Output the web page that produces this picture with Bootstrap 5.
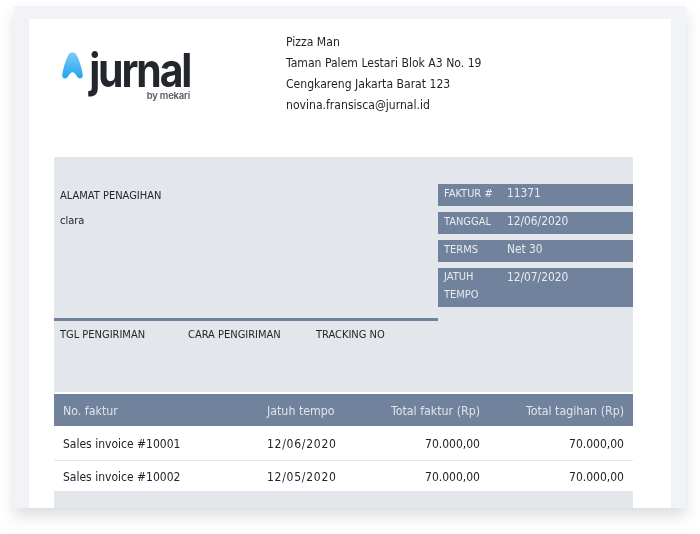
<!DOCTYPE html>
<html lang="id">
<head>
<meta charset="utf-8">
<title>Invoice</title>
<link href="https://cdn.jsdelivr.net/npm/bootstrap@5.3.0/dist/css/bootstrap.min.css" rel="stylesheet">
<style>
html,body{margin:0;background:#fff;height:534px;overflow:hidden}
body{font-family:"DejaVu Sans Condensed","DejaVu Sans",sans-serif;color:#24262b;font-size:12px}
.sheet-wrap{padding:6px 14px 0;filter:blur(.55px)}
.outer-frame{height:502px;padding:13px 15px 0;background:#f1f3f7;box-shadow:0 8px 14px rgba(90,100,120,.22)}
.paper{height:489px;background:#fff;padding:0 38px 0 25px;display:flex;flex-direction:column}
.head-row{height:138px;display:flex}
.logo-box{width:232px;padding:31px 0 0 8px;display:flex;align-items:flex-start}
.logo-mark{width:21px;height:28px;margin-top:2px;flex:none}
.logo-words{margin-left:6px;width:101px;display:flex;flex-direction:column;align-items:flex-end}
.logo-name{font-family:"Inter",sans-serif;font-weight:700;font-size:47px;line-height:36px;letter-spacing:-2.4px;color:#23262c;margin-top:2px;transform:scaleX(.87);transform-origin:right center;white-space:nowrap}
.logo-by{font-family:"Inter",sans-serif;font-weight:600;font-size:9.5px;line-height:10px;color:#555a63;letter-spacing:-.2px;margin-top:3px}
.addr{padding-top:13px;font-size:12.1px;line-height:21px;color:#1f2125}
.invoice{flex:1;background:#e3e6eb;font-size:11px}
.top-grid{display:flex;height:164px}
.bill-side{width:384px;padding:28px 6px 0;border-bottom:3px solid #71839d;line-height:22px;height:164px}
.bill-side p{margin:0 0 3px}
.meta-side{width:195px;padding-top:27px;display:flex;flex-direction:column;gap:6px}
.meta-line{background:#71829d;color:#e8ebf0;display:flex;padding:0 6px;height:22px;line-height:19px}
.meta-line.tall{height:39px;line-height:18px;padding-top:0}
.meta-key{width:63px}
.meta-val{font-size:11.8px}
.ship-row{height:71px;display:flex;padding:4px 6px 0;line-height:20px}
.ship-row span{width:128px}
.ship-sep{height:2px;background:#fff}
.lines{width:100%;font-size:12px}
.lines th{background:#71829d;color:#dfe4ea;font-weight:400;font-size:12.3px;height:32px;padding:2px 9px 0}
.lines td{background:#fff;height:34px;padding:2px 9px 0;color:#22242a;border-bottom:1px solid #e4e6eb}
.lines tr:last-child td{border-bottom:0;height:31px}
.lines .due-date{letter-spacing:.75px}
.col-no{width:204px}.col-due{width:107px}.col-fak{width:124px}
</style>
</head>
<body>
<div class="sheet-wrap">
<div class="outer-frame">
<div class="paper">
  <div class="head-row">
    <div class="logo-box">
      <svg class="logo-mark" viewBox="0 0 22 29" aria-hidden="true">
        <defs><linearGradient id="jg" x1="0" y1="0" x2="0" y2="1"><stop offset="0" stop-color="#7ccbf5"/><stop offset="1" stop-color="#22a3ee"/></linearGradient></defs>
        <path d="M7.6 1.6C9.2-.2 12.8-.2 14.4 1.6 17 5 20.6 15.5 21.7 23.5 22.2 27.4 18.6 29 16.4 26.4L13.4 22.4C12 20.6 10 20.6 8.6 22.4L5.6 26.4C3.4 29 -.2 27.4.3 23.5 1.4 15.5 5 5 7.6 1.6Z" fill="url(#jg)"/>
      </svg>
      <div class="logo-words">
        <div class="logo-name">jurnal</div>
        <div class="logo-by">by mekari</div>
      </div>
    </div>
    <div class="addr">
      <div>Pizza Man</div>
      <div>Taman Palem Lestari Blok A3 No. 19</div>
      <div>Cengkareng Jakarta Barat 123</div>
      <div>novina.fransisca@jurnal.id</div>
    </div>
  </div>
  <div class="invoice">
    <div class="top-grid">
      <div class="bill-side">
        <p>ALAMAT PENAGIHAN</p>
        <p>clara</p>
      </div>
      <div class="meta-side">
        <div class="meta-line"><span class="meta-key">FAKTUR #</span><span class="meta-val">11371</span></div>
        <div class="meta-line"><span class="meta-key">TANGGAL</span><span class="meta-val">12/06/2020</span></div>
        <div class="meta-line"><span class="meta-key">TERMS</span><span class="meta-val">Net 30</span></div>
        <div class="meta-line tall"><span class="meta-key">JATUH TEMPO</span><span class="meta-val">12/07/2020</span></div>
      </div>
    </div>
    <div class="ship-row"><span>TGL PENGIRIMAN</span><span>CARA PENGIRIMAN</span><span>TRACKING NO</span></div>
    <div class="ship-sep"></div>
    <table class="lines">
      <thead><tr><th class="col-no">No. faktur</th><th class="col-due">Jatuh tempo</th><th class="col-fak text-end">Total faktur (Rp)</th><th class="text-end">Total tagihan (Rp)</th></tr></thead>
      <tbody>
        <tr><td>Sales invoice #10001</td><td class="due-date">12/06/2020</td><td class="text-end">70.000,00</td><td class="text-end">70.000,00</td></tr>
        <tr><td>Sales invoice #10002</td><td class="due-date">12/05/2020</td><td class="text-end">70.000,00</td><td class="text-end">70.000,00</td></tr>
      </tbody>
    </table>
  </div>
</div>
</div>
</div>
<script src="https://cdn.jsdelivr.net/npm/bootstrap@5.3.0/dist/js/bootstrap.bundle.min.js"></script>
</body>
</html>
